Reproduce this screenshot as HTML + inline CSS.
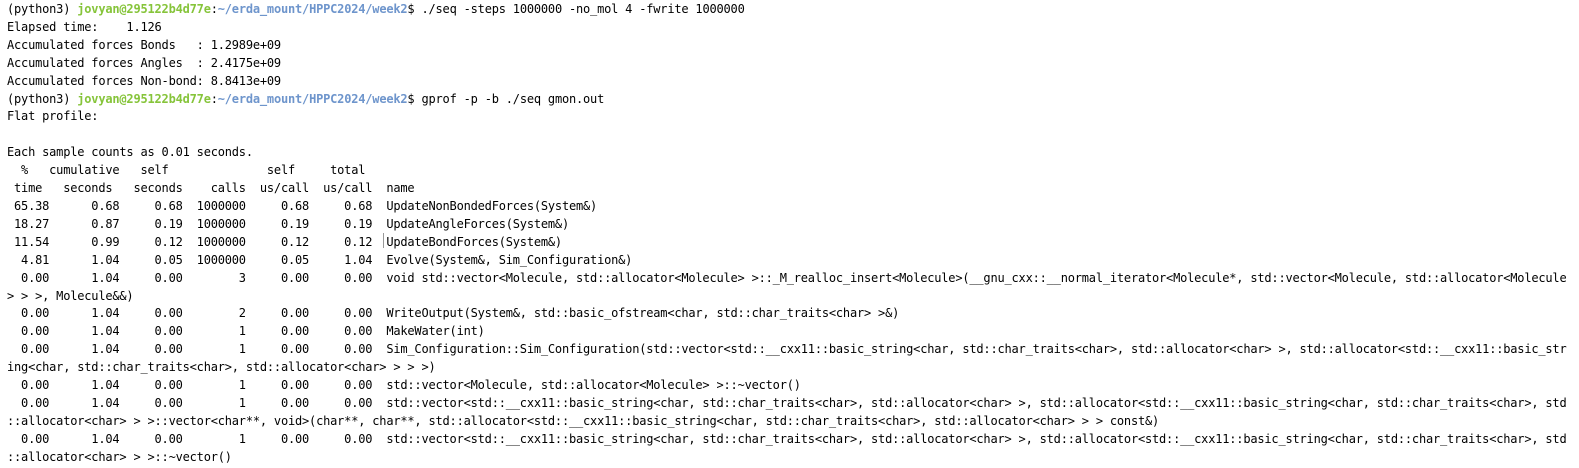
<!DOCTYPE html>
<html><head><meta charset="utf-8"><style>
html,body{margin:0;padding:0;background:#fff;width:1579px;height:468px;overflow:hidden}
pre{margin:0;position:absolute;left:7px;top:1px;font-family:"DejaVu Sans Mono","Liberation Mono",monospace;font-size:12px;letter-spacing:-0.2px;line-height:17.9px;color:#000;white-space:pre}
.g{color:#86c43a;font-weight:bold}
.b{color:#6e95cc;font-weight:bold}
.cur{position:absolute;left:383px;top:233px;width:1px;height:15px;background:#999}
</style></head><body>
<pre>(python3) <span class="g">jovyan@295122b4d77e</span>:<span class="b">~/erda_mount/HPPC2024/week2</span>$ ./seq -steps 1000000 -no_mol 4 -fwrite 1000000
Elapsed time:    1.126
Accumulated forces Bonds   : 1.2989e+09
Accumulated forces Angles  : 2.4175e+09
Accumulated forces Non-bond: 8.8413e+09
(python3) <span class="g">jovyan@295122b4d77e</span>:<span class="b">~/erda_mount/HPPC2024/week2</span>$ gprof -p -b ./seq gmon.out
Flat profile:

Each sample counts as 0.01 seconds.
  %   cumulative   self              self     total
 time   seconds   seconds    calls  us/call  us/call  name
 65.38      0.68     0.68  1000000     0.68     0.68  UpdateNonBondedForces(System&amp;)
 18.27      0.87     0.19  1000000     0.19     0.19  UpdateAngleForces(System&amp;)
 11.54      0.99     0.12  1000000     0.12     0.12  UpdateBondForces(System&amp;)
  4.81      1.04     0.05  1000000     0.05     1.04  Evolve(System&amp;, Sim_Configuration&amp;)
  0.00      1.04     0.00        3     0.00     0.00  void std::vector&lt;Molecule, std::allocator&lt;Molecule&gt; &gt;::_M_realloc_insert&lt;Molecule&gt;(__gnu_cxx::__normal_iterator&lt;Molecule*, std::vector&lt;Molecule, std::allocator&lt;Molecule
&gt; &gt; &gt;, Molecule&amp;&amp;)
  0.00      1.04     0.00        2     0.00     0.00  WriteOutput(System&amp;, std::basic_ofstream&lt;char, std::char_traits&lt;char&gt; &gt;&amp;)
  0.00      1.04     0.00        1     0.00     0.00  MakeWater(int)
  0.00      1.04     0.00        1     0.00     0.00  Sim_Configuration::Sim_Configuration(std::vector&lt;std::__cxx11::basic_string&lt;char, std::char_traits&lt;char&gt;, std::allocator&lt;char&gt; &gt;, std::allocator&lt;std::__cxx11::basic_str
ing&lt;char, std::char_traits&lt;char&gt;, std::allocator&lt;char&gt; &gt; &gt; &gt;)
  0.00      1.04     0.00        1     0.00     0.00  std::vector&lt;Molecule, std::allocator&lt;Molecule&gt; &gt;::~vector()
  0.00      1.04     0.00        1     0.00     0.00  std::vector&lt;std::__cxx11::basic_string&lt;char, std::char_traits&lt;char&gt;, std::allocator&lt;char&gt; &gt;, std::allocator&lt;std::__cxx11::basic_string&lt;char, std::char_traits&lt;char&gt;, std
::allocator&lt;char&gt; &gt; &gt;::vector&lt;char**, void&gt;(char**, char**, std::allocator&lt;std::__cxx11::basic_string&lt;char, std::char_traits&lt;char&gt;, std::allocator&lt;char&gt; &gt; &gt; const&amp;)
  0.00      1.04     0.00        1     0.00     0.00  std::vector&lt;std::__cxx11::basic_string&lt;char, std::char_traits&lt;char&gt;, std::allocator&lt;char&gt; &gt;, std::allocator&lt;std::__cxx11::basic_string&lt;char, std::char_traits&lt;char&gt;, std
::allocator&lt;char&gt; &gt; &gt;::~vector()</pre>
<div class="cur"></div>
</body></html>
